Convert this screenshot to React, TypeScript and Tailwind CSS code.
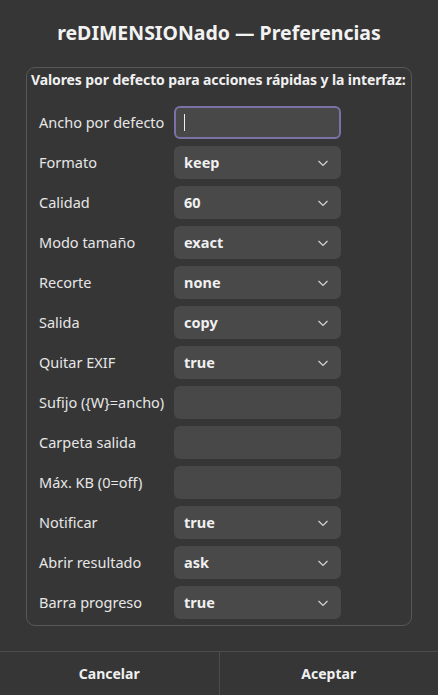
import { useState } from "react";

type Row = { label: string; kind: "entry" | "combo"; value?: string; focused?: boolean };

const ROWS: Row[] = [
  { label: "Ancho por defecto", kind: "entry", focused: true },
  { label: "Formato", kind: "combo", value: "keep" },
  { label: "Calidad", kind: "combo", value: "60" },
  { label: "Modo tamaño", kind: "combo", value: "exact" },
  { label: "Recorte", kind: "combo", value: "none" },
  { label: "Salida", kind: "combo", value: "copy" },
  { label: "Quitar EXIF", kind: "combo", value: "true" },
  { label: "Sufijo ({W}=ancho)", kind: "entry" },
  { label: "Carpeta salida", kind: "entry" },
  { label: "Máx. KB (0=off)", kind: "entry" },
  { label: "Notificar", kind: "combo", value: "true" },
  { label: "Abrir resultado", kind: "combo", value: "ask" },
  { label: "Barra progreso", kind: "combo", value: "true" },
];

function Chevron() {
  return (
    <svg width="12" height="8" viewBox="0 0 12 8" fill="none" className="text-[#d8d8d8]">
      <path d="M1.5 2l4.5 4.5L10.5 2" stroke="currentColor" strokeWidth="1.1" />
    </svg>
  );
}

function Field({ row }: { row: Row }) {
  if (row.kind === "combo") {
    return (
      <button
        type="button"
        className="flex h-[33px] w-[167px] items-center justify-between rounded-[6px] bg-[#494949] pl-[10px] pr-[12px] text-[14.5px] font-bold text-[#f0f0f0]"
      >
        <span>{row.value}</span>
        <Chevron />
      </button>
    );
  }
  return (
    <div
      className={
        row.focused
          ? "flex h-[33px] w-[167px] items-center rounded-[6px] border-2 border-[#7b71a6] bg-[#484848] pl-[8px]"
          : "h-[33px] w-[167px] rounded-[6px] bg-[#484848]"
      }
    >
      {row.focused && <span className="h-[17px] w-px bg-[#eeeeee]" />}
    </div>
  );
}

export default function App() {
  const [rows] = useState(ROWS);

  return (
    <div
      className="flex h-[695px] w-[438px] flex-col bg-[#363636] text-[#eeeeee]"
      style={{ fontFamily: "'Noto Sans', 'Open Sans', sans-serif" }}
    >
      <h1 className="pt-[19px] text-center text-[19.5px] font-bold leading-[28px] text-[#f2f2f2]">
        reDIMENSIONado — Preferencias
      </h1>

      <div className="mx-[26px] mt-[20px] rounded-[9px] border border-[#575757] pb-[6px]">
        <p className="pl-[4px] pt-[2px] text-[14px] font-bold leading-[20px] tracking-[-0.1px] text-[#f0f0f0]">
          Valores por defecto para acciones rápidas y la interfaz:
        </p>
        <div className="mt-[16px] flex flex-col gap-[7px] pl-[12px]">
          {rows.map((r) => (
            <div key={r.label} className="flex items-center">
              <span className="w-[135px] text-[14.5px] text-[#e6e6e6]">{r.label}</span>
              <Field row={r} />
            </div>
          ))}
        </div>
      </div>

      <div className="mt-auto flex h-[44px] border-t border-[#4c4c4c]">
        <button type="button" className="flex-1 pb-[1px] text-[14px] font-bold text-[#f0f0f0]">
          Cancelar
        </button>
        <div className="w-px bg-[#4c4c4c]" />
        <button type="button" className="flex-1 pb-[1px] text-[14px] font-bold text-[#f0f0f0]">
          Aceptar
        </button>
      </div>
    </div>
  );
}
